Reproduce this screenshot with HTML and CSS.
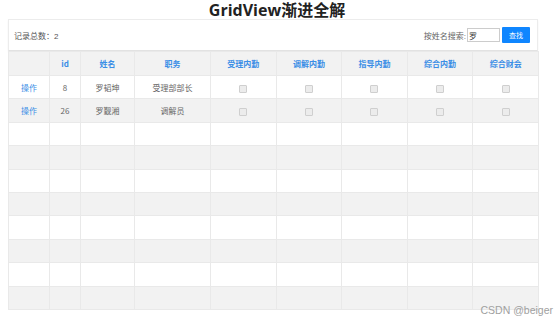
FILE: index.html
```html
<!DOCTYPE html>
<html lang="zh-CN">
<head>
<meta charset="utf-8">
<title>GridView渐进全解</title>
<link rel="stylesheet" href="styles.css">
</head>
<body>
<h1 class="title">GridView渐进全解</h1>
<div class="panel">
  <div class="toolbar">
    <span class="count">记录总数：2</span>
    <div class="search">
      <span class="search-label">按姓名搜索:</span>
      <input class="search-input" type="text" value="罗">
      <button class="search-btn" type="button">查找</button>
    </div>
  </div>
  <table class="grid">
    <colgroup>
      <col class="c-op"><col class="c-id"><col class="c-name"><col class="c-job">
      <col class="c-chk"><col class="c-chk"><col class="c-chk"><col class="c-chk"><col class="c-chk">
    </colgroup>
    <thead>
      <tr>
        <th></th><th>id</th><th>姓名</th><th>职务</th><th>受理内勤</th><th>调解内勤</th><th>指导内勤</th><th>综合内勤</th><th>综合财会</th>
      </tr>
    </thead>
    <tbody>
      <tr>
        <td><a class="op" href="#">操作</a></td><td>8</td><td>罗韬坤</td><td>受理部部长</td>
        <td><span class="cb"></span></td><td><span class="cb"></span></td><td><span class="cb"></span></td><td><span class="cb"></span></td><td><span class="cb"></span></td>
      </tr>
      <tr>
        <td><a class="op" href="#">操作</a></td><td>26</td><td>罗觐湘</td><td>调解员</td>
        <td><span class="cb"></span></td><td><span class="cb"></span></td><td><span class="cb"></span></td><td><span class="cb"></span></td><td><span class="cb"></span></td>
      </tr>
      <tr><td></td><td></td><td></td><td></td><td></td><td></td><td></td><td></td><td></td></tr>
      <tr><td></td><td></td><td></td><td></td><td></td><td></td><td></td><td></td><td></td></tr>
      <tr><td></td><td></td><td></td><td></td><td></td><td></td><td></td><td></td><td></td></tr>
      <tr><td></td><td></td><td></td><td></td><td></td><td></td><td></td><td></td><td></td></tr>
      <tr><td></td><td></td><td></td><td></td><td></td><td></td><td></td><td></td><td></td></tr>
      <tr><td></td><td></td><td></td><td></td><td></td><td></td><td></td><td></td><td></td></tr>
      <tr><td></td><td></td><td></td><td></td><td></td><td></td><td></td><td></td><td></td></tr>
      <tr><td></td><td></td><td></td><td></td><td></td><td></td><td></td><td></td><td></td></tr>
    </tbody>
  </table>
</div>
<div class="watermark">CSDN @beiger</div>
</body>
</html>
```
FILE: styles.css
```css
html, body {
  margin: 0;
  padding: 0;
  background: #ffffff;
}
body {
  padding: 0 8px;
  font-family: "Liberation Sans", "Noto Sans CJK SC", sans-serif;
  color: #555555;
  position: relative;
  height: 322px;
  overflow: hidden;
}
.title {
  margin: 0;
  padding-top: 1px;
  height: 18px;
  line-height: 18px;
  text-align: center;
  font-family: "Open Sans", "Noto Sans CJK SC", sans-serif;
  font-size: 16px;
  font-weight: 700;
  color: #222222;
}
.panel {
  width: 530px;
}
.toolbar {
  height: 30px;
  border: 1px solid #ececec;
  border-bottom-color: #e2e2e2;
  display: flex;
  align-items: center;
  justify-content: space-between;
  padding: 0 7px 0 5px;
  box-shadow: 0 1px 2px rgba(0,0,0,0.05);
}
.count {
  font-size: 8px;
  color: #555;
}
.search {
  display: flex;
  align-items: center;
}
.search-label {
  font-size: 8px;
  color: #666;
  margin-right: 1px;
}
.search-input {
  box-sizing: border-box;
  width: 33px;
  height: 14px;
  border: 1px solid #cccccc;
  padding: 0 1px;
  font-size: 8px;
  font-family: "Noto Sans CJK SC", sans-serif;
  color: #333;
  margin: 0 2px 0 0;
  outline: none;
}
.search-btn {
  box-sizing: border-box;
  width: 28px;
  height: 16px;
  border: none;
  border-radius: 1px;
  background: #0f86ff;
  color: #ffffff;
  font-size: 7px;
  font-family: "Noto Sans CJK SC", sans-serif;
  padding: 0;
}
.grid {
  width: 530px;
  border-collapse: collapse;
  table-layout: fixed;
  font-size: 8px;
}
.c-op { width: 41px; }
.c-id { width: 31px; }
.c-name { width: 54px; }
.c-job { width: 76px; }
.c-chk { width: 65.6px; }
.grid th, .grid td {
  border: 1px solid #e9e9e9;
  text-align: center;
  padding: 0;
  overflow: hidden;
  white-space: nowrap;
}
.grid th {
  height: 23px;
  background: #f2f2f2;
  color: #3a8ee6;
  font-weight: 700;
  font-family: "Noto Sans CJK SC", sans-serif;
}
.grid td {
  height: 22.4px;
  color: #666;
  font-family: "Noto Sans CJK SC", sans-serif;
}
.grid tbody tr:nth-child(odd) td { background: #ffffff; }
.grid tbody tr:nth-child(even) td { background: #f2f2f2; }
.op {
  color: #3a8ee6;
  text-decoration: none;
}
.cb {
  display: inline-block;
  width: 6px;
  height: 6px;
  border: 1px solid #cfcfcf;
  border-radius: 1px;
  background: #ececec;
  vertical-align: middle;
}
.watermark {
  position: absolute;
  right: 1px;
  top: 304px;
  font-family: "Liberation Sans", sans-serif;
  font-size: 10.5px;
  color: #a0a0a0;
}
```
